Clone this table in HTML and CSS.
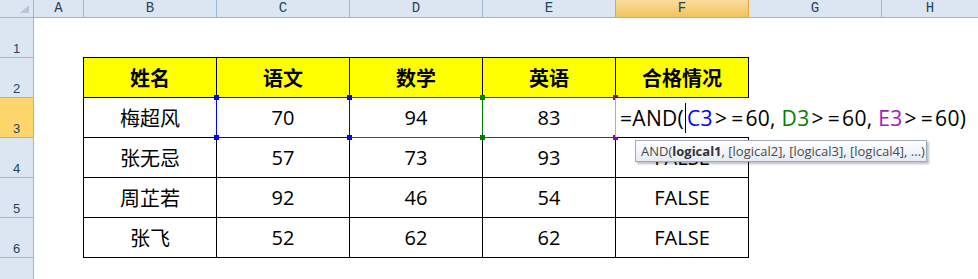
FILE: index.html
```html
<!DOCTYPE html>
<html lang="zh">
<head>
<meta charset="utf-8">
<title>AND 函数</title>
<link rel="stylesheet" href="styles.css">
</head>
<body>
<div class="sheet">
  <div class="colheads">
    <div class="corner"><span class="tri"></span></div>
    <div class="ch ch-a">A</div>
    <div class="ch">B</div>
    <div class="ch">C</div>
    <div class="ch">D</div>
    <div class="ch pre">E</div>
    <div class="ch active">F</div>
    <div class="ch">G</div>
    <div class="ch ch-last">H</div>
  </div>
  <div class="main">
    <div class="rowheads">
      <div class="rh">1</div>
      <div class="rh pre">2</div>
      <div class="rh active">3</div>
      <div class="rh">4</div>
      <div class="rh">5</div>
      <div class="rh">6</div>
      <div class="rh rh-rest"></div>
    </div>
    <div class="canvas">
      <div class="table">
        <div class="cell hd">姓名</div>
        <div class="cell hd">语文</div>
        <div class="cell hd">数学</div>
        <div class="cell hd">英语</div>
        <div class="cell hd">合格情况</div>

        <div class="cell">梅超风</div>
        <div class="cell ref ref-c">70</div>
        <div class="cell ref ref-d">94</div>
        <div class="cell ref ref-e">83</div>
        <div class="cell edit">
          <span class="formula">=AND(<i class="caret"></i><span class="c-blue">C3</span><span class="op">&gt;</span><span class="op">=</span>60, <span class="c-green">D3</span><span class="op">&gt;</span><span class="op">=</span>60, <span class="c-purple">E3</span><span class="op">&gt;</span><span class="op">=</span>60)</span>
          <div class="tip">AND(<b>logical1</b>, [logical2], [logical3], [logical4], ...)</div>
        </div>

        <div class="cell">张无忌</div>
        <div class="cell">57</div>
        <div class="cell">73</div>
        <div class="cell">93</div>
        <div class="cell">FALSE</div>

        <div class="cell">周芷若</div>
        <div class="cell">92</div>
        <div class="cell">46</div>
        <div class="cell">54</div>
        <div class="cell">FALSE</div>

        <div class="cell">张飞</div>
        <div class="cell">52</div>
        <div class="cell">62</div>
        <div class="cell">62</div>
        <div class="cell">FALSE</div>
      </div>
    </div>
  </div>
</div>
</body>
</html>
```
FILE: styles.css
```css
html, body {
  margin: 0;
  padding: 0;
  background: #ffffff;
  overflow: hidden;
}
body {
  width: 978px;
  height: 279px;
}
.sheet {
  display: flex;
  flex-direction: column;
  height: 279px;
  overflow: hidden;
}

/* column headers */
.colheads {
  display: flex;
  height: 18px;
  flex: 0 0 18px;
}
.corner, .ch {
  box-sizing: border-box;
  height: 18px;
  background: #dce6f2;
  border-right: 1px solid #9eb6ce;
  border-bottom: 1px solid #9eb6ce;
}
.corner {
  flex: 0 0 34px;
  display: flex;
  align-items: flex-end;
  justify-content: flex-end;
  padding: 0 4px 4px 0;
}
.tri {
  width: 0;
  height: 0;
  border-left: 9px solid transparent;
  border-bottom: 8px solid #b6c6d8;
}
.ch {
  flex: 0 0 133px;
  text-align: center;
  font-family: "Liberation Mono", monospace;
  font-size: 14px;
  line-height: 17px;
  color: #27415f;
}
.ch-a { flex-basis: 50px; }
.ch-last { flex: 1 1 auto; border-right: none; }
.ch.pre { border-right-color: #e2a84a; }
.ch.active {
  background: linear-gradient(#f9dc9c, #f2c35f);
  border-right-color: #e2a84a;
  border-bottom-color: #e2a84a;
}

/* body */
.main {
  display: flex;
  flex: 1 1 auto;
  min-height: 0;
}
.rowheads {
  flex: 0 0 34px;
  display: flex;
  flex-direction: column;
  background: #dce6f2;
  min-height: 0;
}
.rh {
  box-sizing: border-box;
  height: 40px;
  flex: 0 0 40px;
  border-right: 1px solid #9eb6ce;
  border-bottom: 1px solid #9eb6ce;
  display: flex;
  align-items: flex-end;
  justify-content: center;
  font-family: "Liberation Sans", sans-serif;
  font-size: 13px;
  line-height: 15px;
  padding-bottom: 1px;
  color: #27415f;
}
.rh.pre { border-bottom-color: #e2a84a; }
.rh.active {
  background: #ffd66e;
  border-bottom-color: #e2a84a;
  border-right-color: #e2a84a;
}
.rh-rest {
  flex: 1 1 auto;
  min-height: 0;
  border-bottom: none;
}

.canvas {
  flex: 1 1 auto;
  padding: 39px 0 0 49px;
}
.table {
  display: grid;
  grid-template-columns: repeat(5, 132px);
  grid-auto-rows: 39px;
  gap: 1px;
  background: #000;
  border: 1px solid #000;
  width: max-content;
}
.cell {
  background: #fff;
  display: flex;
  align-items: center;
  justify-content: center;
  font-family: "Open Sans", "Noto Sans CJK SC", sans-serif;
  font-size: 20px;
  color: #000;
}
.cell.hd {
  background: #ffff00;
  font-weight: bold;
}

/* reference range highlights */
.ref { position: relative; }
.ref::before {
  content: "";
  position: absolute;
  left: -1px; top: -1px; right: -1px; bottom: -1px;
  border: 1px solid var(--rc);
}
.ref::after {
  content: "";
  position: absolute;
  left: -3px; top: -3px;
  width: 5px; height: 5px;
  background: var(--rc);
  box-shadow: 133px 0 0 var(--rc), 0 40px 0 var(--rc), 133px 40px 0 var(--rc);
}
.ref-c { --rc: #0000ff; z-index: 3; }
.ref-d { --rc: #008000; z-index: 2; }
.ref-e { --rc: #8a00c8; z-index: 1; }

/* cell in edit mode */
.edit {
  position: relative;
  z-index: 4;
  justify-content: flex-start;
  align-items: stretch;
}
.edit::before {
  content: "";
  position: absolute;
  left: -1px; top: -1px; right: -1px; height: 0;
  border-top: 1px solid #0000ff;
}
.edit::after {
  content: "";
  position: absolute;
  left: -1px; top: 0; bottom: 0;
  border-left: 1px solid #66ee33;
}
.formula {
  flex: 0 0 auto;
  display: flex;
  align-items: center;
  width: max-content;
  height: 39px;
  background: #fff;
  padding: 0 8px 0 4px;
  white-space: pre;
  font-family: "Open Sans", sans-serif;
  font-size: 21px;
  letter-spacing: 0.3px;
  color: #000;
}
.caret {
  display: inline-block;
  width: 1px;
  height: 30px;
  background: #000;
  margin: 0 1px 0 1px;
}
.op { margin: 0 2px; }
.c-blue { color: #0000ff; }
.c-green { color: #008000; }
.c-purple { color: #a020c0; }

.tip {
  position: absolute;
  left: 19px;
  top: 42px;
  box-sizing: border-box;
  width: 292px;
  height: 22px;
  padding: 0 0 0 5px;
  border: 1px solid #a4abb8;
  background: linear-gradient(#ffffff, #e4ebf5);
  box-shadow: 2px 2px 2px rgba(0, 0, 0, 0.25);
  font-family: "Open Sans", sans-serif;
  font-size: 13px;
  line-height: 20px;
  color: #4a4a4a;
  white-space: nowrap;
}
.tip b { color: #333; }
```
